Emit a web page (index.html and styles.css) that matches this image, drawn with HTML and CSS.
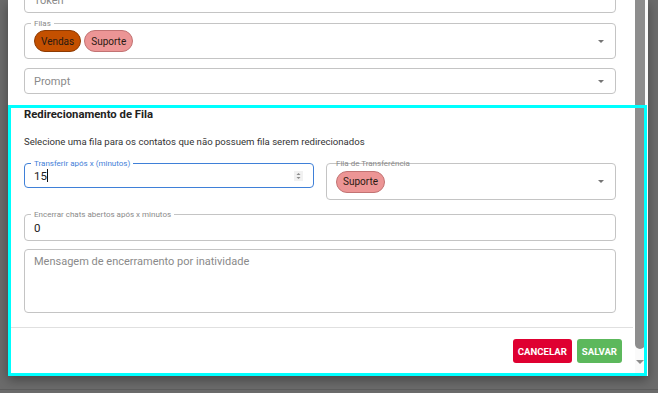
FILE: index.html
```html
<!DOCTYPE html>
<html lang="pt-BR">
<head>
    <meta charset="UTF-8">
    <meta name="viewport" content="width=device-width, initial-scale=1.0">
    <title>Editar conexão</title>
    <link rel="stylesheet" href="styles.css">
</head>
<body>
    <div class="dialog">
        <div class="dialog-scroll">
            <div class="form">
                <div class="field field-token">
                    <span class="placeholder">Token</span>
                </div>

                <div class="field field-filas">
                    <span class="label notched">Filas</span>
                    <span class="chip chip-vendas">Vendas</span>
                    <span class="chip chip-suporte">Suporte</span>
                    <span class="arrow"></span>
                </div>

                <div class="field field-prompt">
                    <span class="placeholder">Prompt</span>
                    <span class="arrow"></span>
                </div>

                <!-- Redirecionamento -->
                <h3 class="section-title">Redirecionamento de Fila</h3>
                <p class="section-text">Selecione uma fila para os contatos que não possuem fila serem redirecionados</p>

                <div class="row">
                    <div class="field field-focus">
                        <span class="label notched">Transferir após x (minutos)</span>
                        <span class="value">15</span><span class="caret"></span>
                        <svg class="spinner" width="9" height="10" viewBox="0 0 9 10">
                            <rect width="9" height="10" fill="#f1f1f1"/>
                            <path d="M2.5 4 L4.5 2 L6.5 4 Z M2.5 6 L4.5 8 L6.5 6 Z" fill="#8a8a8a"/>
                        </svg>
                    </div>
                    <div class="field field-fila">
                        <span class="label plain">Fila de Transferência</span>
                        <span class="chip chip-suporte">Suporte</span>
                        <span class="arrow"></span>
                    </div>
                </div>

                <div class="field field-encerrar">
                    <span class="label notched">Encerrar chats abertos após x minutos</span>
                    <span class="value">0</span>
                </div>

                <div class="field field-textarea">
                    <span class="placeholder">Mensagem de encerramento por inatividade</span>
                </div>
            </div>

            <div class="actions">
                <button class="btn btn-cancel">Cancelar</button>
                <button class="btn btn-save">Salvar</button>
            </div>
        </div>

        <div class="scrollbar">
            <div class="thumb"></div>
            <div class="scroll-arrow"></div>
        </div>
    </div>
    <div class="page-bottom"></div>

    <div class="highlight"></div>
</body>
</html>
```

FILE: styles.css
```css
body {
    margin: 0;
    overflow: hidden;
    background: #6b6b6b;
    font-family: Roboto, "Liberation Sans", sans-serif;
}

.dialog {
    display: flex;
    margin-left: 8px;
    width: 640px;
    height: 376px;
    background: #fff;
    overflow: hidden;
    box-shadow: 0 4px 10px rgba(0, 0, 0, 0.35);
}

.dialog-scroll {
    flex: 1;
    display: flex;
    flex-direction: column;
}

.form {
    padding: 0 19px 14px 16px;
}

.field {
    position: relative;
    display: flex;
    align-items: center;
    box-sizing: border-box;
    border: 1px solid #c4c4c4;
    border-radius: 4px;
    padding: 0 9px;
    color: #222;
    font-size: 11.5px;
}

.field-token {
    margin-top: -13px;
    height: 26px;
}

.field-filas {
    margin-top: 10px;
    height: 36px;
    gap: 3px;
}

.field-prompt {
    margin-top: 9px;
    height: 26px;
}

.placeholder {
    color: #8a8a8a;
    font-size: 11px;
}

.label {
    position: absolute;
    top: -5px;
    left: 6px;
    padding: 0 3px;
    font-size: 8px;
    line-height: 9px;
    color: #8a8a8a;
}

.label.notched {
    background: #fff;
}

.arrow {
    margin-left: auto;
    margin-right: 2px;
    border-left: 3px solid transparent;
    border-right: 3px solid transparent;
    border-top: 3px solid #757575;
}

.chip {
    display: inline-flex;
    align-items: center;
    box-sizing: border-box;
    height: 22px;
    padding: 0 6px;
    border-radius: 11px;
    border: 1px solid;
    font-size: 10px;
    color: #2a1a12;
}

.chip-vendas {
    background: #c45000;
    border-color: #8e3a02;
}

.chip-suporte {
    background: #ec9595;
    border-color: #c27373;
}

.section-title {
    margin: 14px 0 0;
    font-size: 11.3px;
    line-height: 14px;
    font-weight: 700;
    color: #222;
}

.section-text {
    margin: 13px 0 0;
    font-size: 9.6px;
    line-height: 13px;
    color: #333;
}

.row {
    display: grid;
    grid-template-columns: 1fr 1fr;
    gap: 12px;
    align-items: start;
    margin-top: 15px;
}

.field-focus {
    height: 25px;
    border-color: #3f80d8;
}

.field-focus .label {
    color: #3f80d8;
}

.caret {
    width: 1px;
    height: 13px;
    background: #111;
}

.spinner {
    margin-left: auto;
    margin-right: 1px;
}

.field-fila {
    height: 37px;
}

.field-encerrar {
    margin-top: 14px;
    height: 27px;
}

.field-textarea {
    margin-top: 8px;
    height: 64px;
    align-items: flex-start;
    padding-top: 5px;
}

.actions {
    display: flex;
    justify-content: flex-end;
    gap: 5px;
    margin-right: 2px;
    padding: 11px 11px 13px 0;
    border-top: 1px solid #e0e0e0;
}

.btn {
    height: 24px;
    padding: 0 5px;
    border: none;
    border-radius: 3px;
    color: #fff;
    font-family: Roboto, "Liberation Sans", sans-serif;
    font-size: 9.6px;
    font-weight: 700;
    text-transform: uppercase;
}

.btn-cancel {
    background: #df0031;
}

.btn-save {
    background: #5cb85c;
}

.scrollbar {
    display: flex;
    flex-direction: column;
    align-items: flex-start;
    width: 13px;
    background: #fafafa;
}

.thumb {
    width: 10px;
    height: 349px;
    background: #8d8d8d;
    border-radius: 0 0 5px 5px;
}

.scroll-arrow {
    margin: 11px 0 0 1px;
    border-left: 4px solid transparent;
    border-right: 4px solid transparent;
    border-top: 4px solid #8d8d8d;
}

.page-bottom {
    margin-top: 13px;
    height: 10px;
    border-top: 1px solid #5c5c5c;
}

.highlight {
    position: absolute;
    top: 105px;
    left: 8px;
    width: 639px;
    height: 271px;
    box-sizing: border-box;
    border: 3px solid #00ffff;
    pointer-events: none;
}
```
